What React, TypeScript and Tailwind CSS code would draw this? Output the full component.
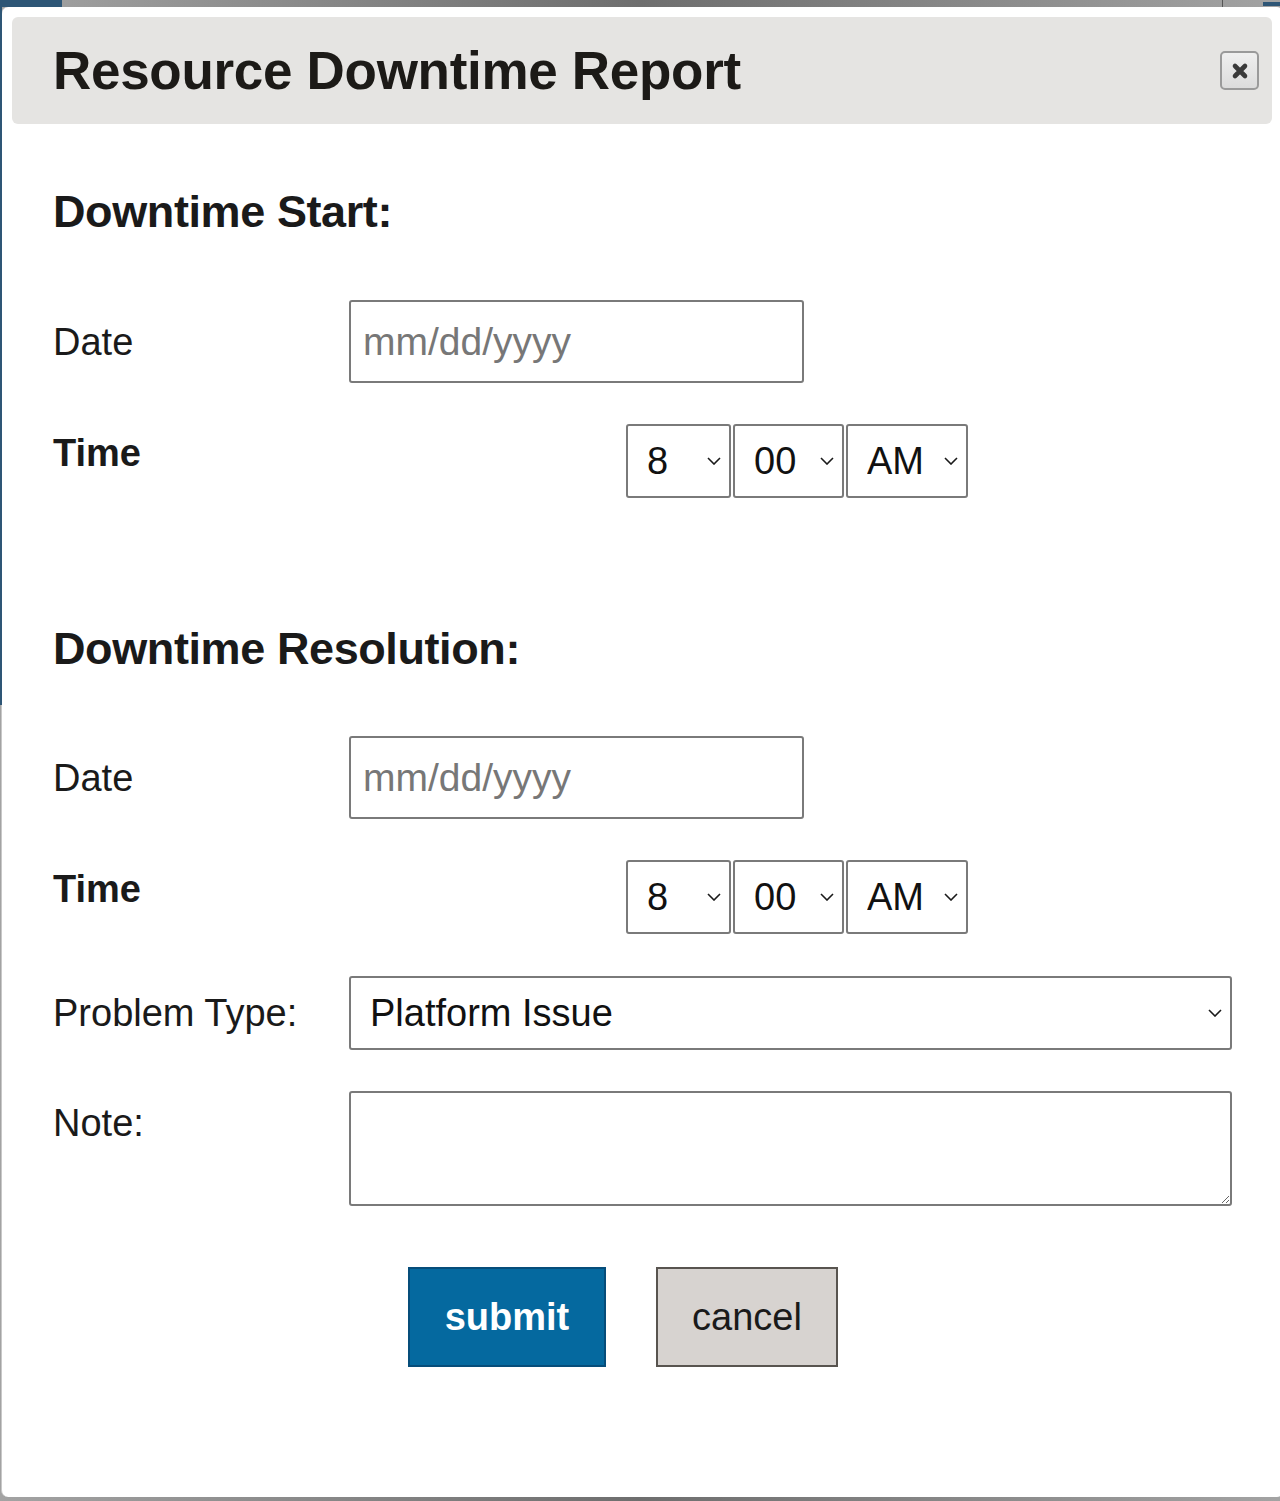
import React from "react";

const font = { fontFamily: '"Liberation Sans", Arial, sans-serif' };

function Chevron() {
  return (
    <svg
      width="14"
      height="8"
      viewBox="0 0 14 8"
      className="pointer-events-none absolute right-[10px] top-1/2 -translate-y-1/2"
    >
      <path d="M1 1 L7 7 L13 1" fill="none" stroke="#1a1a1a" strokeWidth="1.6" />
    </svg>
  );
}

function Select({ value, options, className }: { value: string; options: string[]; className: string }) {
  return (
    <div className={`relative ${className}`}>
      <select
        defaultValue={value}
        className="h-full w-full appearance-none rounded-[3px] border-2 border-[#7a7a7a] bg-white pl-[19px] text-[38px] text-[#111] outline-none"
        style={font}
      >
        {options.map((o) => (
          <option key={o}>{o}</option>
        ))}
      </select>
      <Chevron />
    </div>
  );
}

function DateRow() {
  return (
    <div className="flex items-center">
      <label className="w-[296px] text-[38px] leading-[44px] text-[#1a1a1a]">Date</label>
      <input
        type="text"
        placeholder="mm/dd/yyyy"
        className="h-[83px] w-[455px] rounded-[3px] border-2 border-[#7a7a7a] bg-white px-[12px] text-[39px] text-[#111] outline-none placeholder:text-[#777]"
        style={font}
      />
    </div>
  );
}

function TimeRow() {
  const hours = ["1", "2", "3", "4", "5", "6", "7", "8", "9", "10", "11", "12"];
  const mins = ["00", "15", "30", "45"];
  return (
    <div className="mt-[41px] flex items-start">
      <label className="w-[296px] pt-[7px] text-[38px] font-bold leading-[44px] text-[#1a1a1a]">Time</label>
      <div className="ml-[277px] flex h-[74px] gap-[2px]">
        <Select value="8" options={hours} className="w-[105px]" />
        <Select value="00" options={mins} className="w-[111px]" />
        <Select value="AM" options={["AM", "PM"]} className="w-[122px]" />
      </div>
    </div>
  );
}

export default function App() {
  return (
    <div
      className="relative h-[1501px] w-[1280px] overflow-hidden bg-gradient-to-r from-[#a3a3a3] via-[#6e6e6e] to-[#a3a3a3] pl-[1px] pt-[7px]"
      style={font}
    >
      {/* page behind the overlay */}
      <div className="absolute left-0 top-0 h-[7px] w-[62px] bg-[#2e5676]" />
      <div className="absolute left-0 top-0 h-[705px] w-[2px] bg-[#2e5676]" />
      <div className="absolute left-[1222px] top-0 h-[7px] w-[1px] bg-[#555]" />
      <div className="absolute left-[1263px] top-[2px] h-[4px] w-[17px] bg-[#2e5676]" />

      <div className="h-[1490px] w-[1283px] rounded-[7px] border-l border-[#c8c8c8] bg-white pl-[10px] pt-[10px]">
        {/* header */}
        <div className="flex h-[107px] w-[1260px] items-center justify-between rounded-[6px] bg-[#e5e4e2] pl-[41px] pr-[13px]">
          <h1 className="text-[53px] font-bold leading-[60px] tracking-[-0.3px] text-[#1c1a17]">
            Resource Downtime Report
          </h1>
          <button className="flex h-[39px] w-[39px] items-center justify-center rounded-[5px] border-2 border-[#9a9a9a] bg-gradient-to-b from-[#efefef] to-[#dcdcdc]">
            <svg width="18" height="18" viewBox="0 0 18 18">
              <path d="M4 4 L14 14 M14 4 L4 14" stroke="#3a3a3a" strokeWidth="4.6" strokeLinecap="round" />
            </svg>
          </button>
        </div>

        {/* body */}
        <div className="pl-[41px]">
          <h2 className="mt-[62px] text-[45px] font-bold leading-[52px] tracking-[-0.4px] text-[#1a1a1a]">
            Downtime Start:
          </h2>
          <div className="mt-[62px]">
            <DateRow />
            <TimeRow />
          </div>

          <h2 className="mt-[125px] text-[45px] font-bold leading-[52px] tracking-[-0.4px] text-[#1a1a1a]">
            Downtime Resolution:
          </h2>
          <div className="mt-[61px]">
            <DateRow />
            <TimeRow />
          </div>

          <div className="mt-[42px] flex items-center">
            <label className="w-[296px] text-[38px] leading-[44px] text-[#1a1a1a]">Problem Type:</label>
            <Select
              value="Platform Issue"
              options={["Platform Issue", "Network Issue", "Hardware Issue", "Other"]}
              className="h-[74px] w-[883px]"
            />
          </div>

          <div className="mt-[41px] flex items-start">
            <label className="w-[296px] pt-[10px] text-[38px] leading-[44px] text-[#1a1a1a]">Note:</label>
            <textarea
              className="h-[115px] w-[883px] rounded-[3px] border-2 border-[#7a7a7a] bg-white p-2 text-[24px] outline-none"
              style={font}
            />
          </div>

          <div className="ml-[355px] mt-[61px] flex gap-[50px]">
            <button className="h-[100px] w-[198px] border-2 border-[#064d7a] bg-[#05699f] text-[38px] font-bold text-white">
              submit
            </button>
            <button className="h-[100px] w-[182px] border-2 border-[#58544f] bg-[#d7d3d0] text-[38px] text-[#1a1a1a]">
              cancel
            </button>
          </div>
        </div>
      </div>
    </div>
  );
}
